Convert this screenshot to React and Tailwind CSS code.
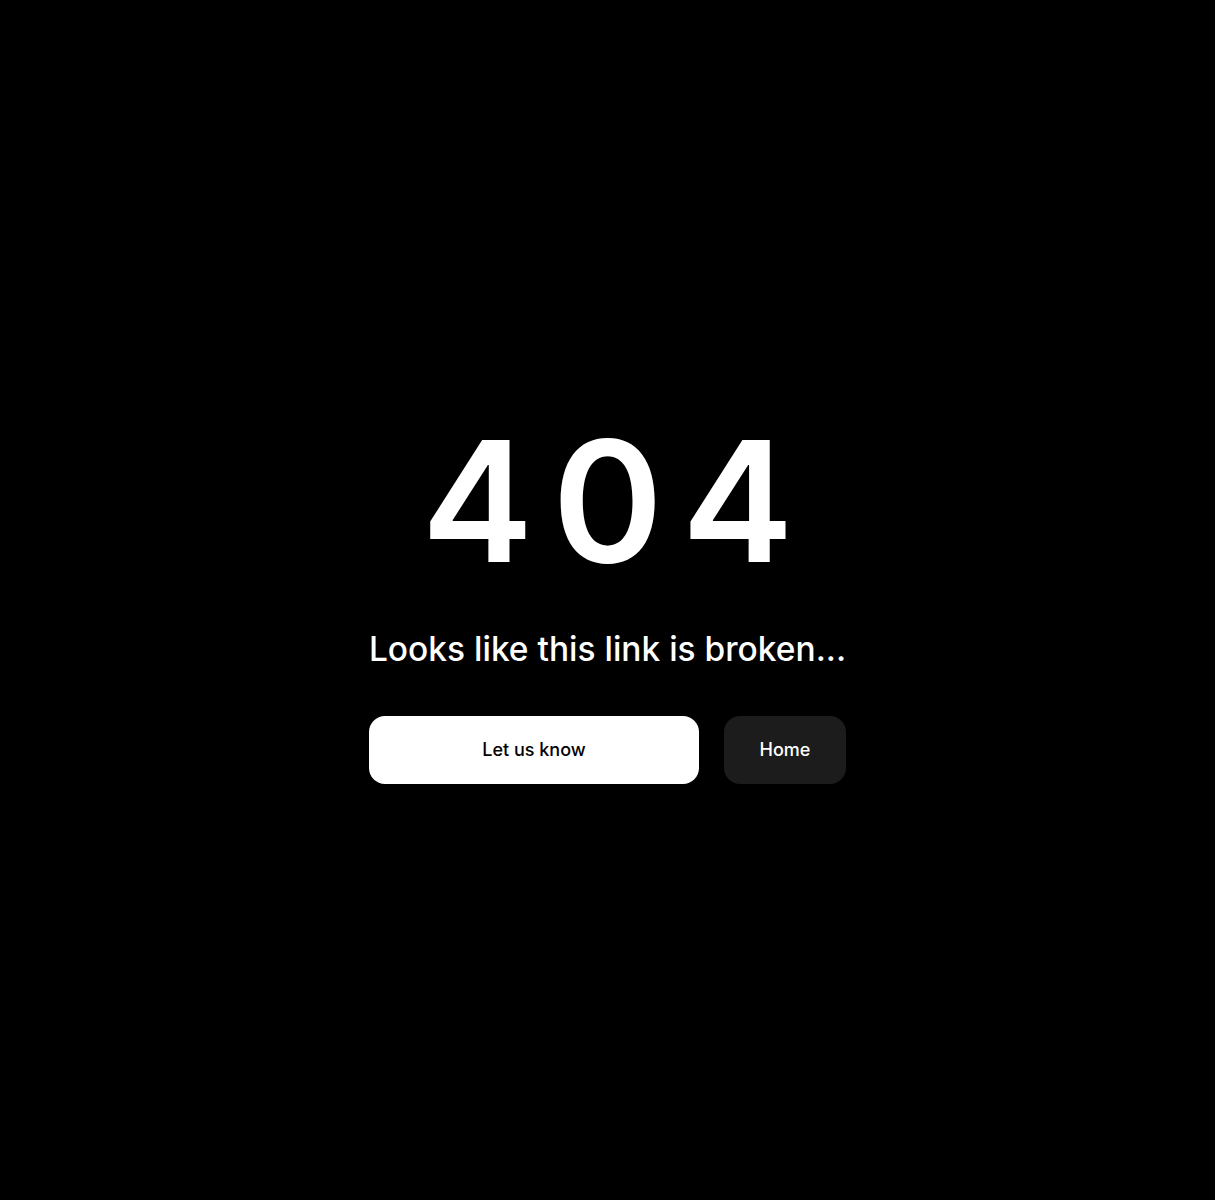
import React from 'react';

export default function App() {
  return (
    <div className="min-h-screen bg-black flex items-center justify-center" style={{ fontFamily: 'Inter, "Noto Sans", sans-serif' }}>
      <div className="flex flex-col items-center w-[477px] pt-[1px]">
        <h1 className="text-white text-[168px] leading-none font-semibold tracking-[0.112em] pl-[19px]">404</h1>
        <p className="mt-[48px] text-white text-[33.5px] leading-none font-medium whitespace-nowrap">Looks like this link is broken...</p>
        <div className="mt-[50px] flex w-full gap-[25px]">
          <button className="flex-1 h-[68px] rounded-2xl bg-white text-black text-lg font-medium">Let us know</button>
          <button className="w-[122px] h-[68px] rounded-2xl bg-[#1c1c1c] text-white text-lg font-medium">Home</button>
        </div>
      </div>
    </div>
  );
}
